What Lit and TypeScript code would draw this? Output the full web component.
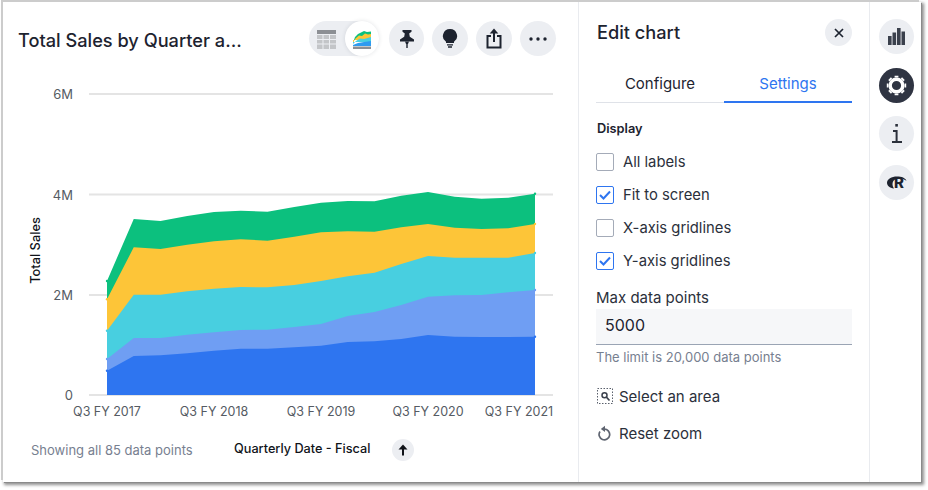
import { LitElement, html, css, svg } from "lit";
import { customElement } from "lit/decorators.js";

const XS = Array.from({ length: 17 }, (_, i) => 107 + i * 26.75);
const BOTTOM = 395;
const SERIES: { color: string; top: number[] }[] = [
  { color: "#0cc07e", top: [281, 219, 221, 216, 212, 210.7, 211.7, 207, 202.7, 201, 201.3, 195.7, 192, 196.7, 198.7, 197.7, 193.7] },
  { color: "#fdc538", top: [299.3, 247.3, 249, 244.7, 241.3, 239.3, 240.7, 236.7, 232.3, 231.3, 231.7, 227.3, 224, 227.7, 229, 228.3, 224] },
  { color: "#48cfe0", top: [330.7, 294.7, 294.7, 291.3, 288.7, 287, 287.3, 285, 281, 276.3, 272.7, 264, 256, 257.7, 257.7, 257.7, 253] },
  { color: "#6f9ef3", top: [359, 338, 338, 334.7, 332.3, 330, 329.7, 327, 324, 316, 312, 305, 296.7, 295.3, 295, 292.3, 290] },
  { color: "#2e75f0", top: [370.7, 356, 355.3, 353.3, 350.7, 348.7, 348.7, 347.3, 345.7, 342, 341.3, 339, 335, 336.7, 337, 337, 336.7] },
];

function areaPath(top: number[]) {
  const line = top.map((y, i) => `${XS[i]},${y}`).join(" L");
  return `M${XS[0]},${BOTTOM} L${line} L${XS[16]},${BOTTOM} Z`;
}

const GRID = [
  { y: 94, label: "6M" },
  { y: 194.5, label: "4M" },
  { y: 295, label: "2M" },
  { y: 395, label: "0" },
];
const XLABELS = [
  { x: 107, label: "Q3 FY 2017" },
  { x: 214, label: "Q3 FY 2018" },
  { x: 321, label: "Q3 FY 2019" },
  { x: 428, label: "Q3 FY 2020" },
  { x: 519, label: "Q3 FY 2021" },
];

const CHECKS = [
  { label: "All labels", on: false },
  { label: "Fit to screen", on: true },
  { label: "X-axis gridlines", on: false },
  { label: "Y-axis gridlines", on: true },
];

@customElement("app-root")
export class AppRoot extends LitElement {
  static styles = css`
    :host {
      display: block;
      width: 928px;
      height: 490px;
      overflow: hidden;
      background: #fff;
      font-family: Inter, "Liberation Sans", sans-serif;
      color: #1d232f;
    }
    .stage {
      box-sizing: border-box;
      width: 928px;
      height: 490px;
      padding: 2px 7px 8px 3px;
    }
    .card {
      display: flex;
      height: 480px;
      background: #fff;
      box-shadow: -2px -2px 0 #cccccc, 1px 1px 0 #8a8a8a, 2px 2px 3px 1px #8f8f8f;
    }
    .main {
      box-sizing: border-box;
      width: 576px;
      border-right: 1px solid #e9ebef;
      display: flex;
      flex-direction: column;
    }
    .head {
      display: flex;
      align-items: center;
      justify-content: space-between;
      padding: 19px 22px 0 15px;
    }
    .title {
      font-size: 18.2px;
      font-weight: 500;
      white-space: nowrap;
      padding-top: 3px;
    }
    .tools {
      display: flex;
      gap: 8px;
    }
    .round {
      width: 36px;
      height: 35px;
      border-radius: 50%;
      background: #eceef2;
      display: flex;
      align-items: center;
      justify-content: center;
      flex: none;
    }
    .round.pin {
      width: 35px;
    }
    .toggle {
      width: 70px;
      height: 35px;
      border-radius: 18px;
      background: #eceef2;
      display: flex;
      align-items: center;
      margin-right: 2px;
    }
    .toggle .left {
      width: 36px;
      display: flex;
      justify-content: center;
      padding-top: 1px;
    }
    .toggle .right {
      width: 35px;
      height: 35px;
      border-radius: 50%;
      background: #fff;
      box-shadow: 0 0 4px rgba(30, 40, 60, 0.12);
      display: flex;
      align-items: center;
      justify-content: center;
      padding-top: 2px;
      box-sizing: border-box;
    }
    .plot {
      display: block;
      width: 575px;
      height: 366px;
      margin-top: 10px;
    }
    .axis {
      font-family: Inter, "Liberation Sans", sans-serif;
      font-size: 13px;
      fill: #555b63;
    }
    .axis-x {
      font-size: 12.5px;
    }
    .axis-title {
      font-family: Inter, "Liberation Sans", sans-serif;
      font-size: 12.8px;
      font-weight: 500;
      fill: #101319;
    }
    .foot {
      display: flex;
      align-items: center;
      padding: 7px 0 0 28px;
    }
    .count {
      font-size: 13px;
      color: #778090;
      width: 203px;
      white-space: nowrap;
    }
    .dim {
      font-size: 12.7px;
      font-weight: 500;
      color: #101319;
      width: 158px;
      white-space: nowrap;
      margin-top: -3px;
    }
    .sort {
      width: 22px;
      height: 22px;
      border-radius: 50%;
      background: #eceef2;
      display: flex;
      align-items: center;
      justify-content: center;
    }
    .panel {
      box-sizing: border-box;
      width: 291px;
      border-right: 1px solid #e9ebef;
      padding: 17px 17px 0 17px;
      display: flex;
      flex-direction: column;
    }
    .panel-head {
      display: flex;
      align-items: center;
      justify-content: space-between;
      height: 27px;
    }
    .panel-title {
      font-size: 18.2px;
      font-weight: 500;
      padding: 0 0 2px 1px;
    }
    .close {
      width: 27px;
      height: 27px;
      border-radius: 50%;
      background: #eceef2;
      display: flex;
      align-items: center;
      justify-content: center;
    }
    .tabs {
      display: flex;
      margin-top: 20px;
      border-bottom: 1px solid #dfe2e8;
      height: 37px;
      box-sizing: border-box;
    }
    .tab {
      flex: 1;
      text-align: center;
      font-size: 15px;
      line-height: 35px;
      box-sizing: border-box;
      height: 37px;
    }
    .tab.active {
      color: #2e75f0;
      border-bottom: 2px solid #2e75f0;
    }
    .section {
      font-size: 12.8px;
      font-weight: 600;
      margin-top: 18px;
      line-height: 15px;
      padding-left: 1px;
    }
    .checks {
      display: flex;
      flex-direction: column;
      gap: 15px;
      margin-top: 17px;
    }
    .check {
      display: flex;
      align-items: center;
      height: 18px;
      font-size: 14.8px;
      color: #2b303b;
    }
    .box {
      box-sizing: border-box;
      width: 18px;
      height: 18px;
      border: 1px solid #a4abb8;
      border-radius: 2px;
      margin-right: 9px;
      display: flex;
      align-items: center;
      justify-content: center;
      background: #fff;
    }
    .box.on {
      border-color: #2e75f0;
    }
    .field-label {
      font-size: 15px;
      margin-top: 18px;
      line-height: 20px;
      color: #2b303b;
    }
    .input {
      box-sizing: border-box;
      height: 36px;
      margin-top: 1px;
      background: #f6f7f9;
      border-bottom: 1px solid #9aa4b4;
      font-size: 16px;
      padding-left: 9px;
      line-height: 32px;
      color: #1d232f;
    }
    .hint {
      font-size: 13px;
      color: #778090;
      margin-top: 4px;
      line-height: 16px;
    }
    .action {
      display: flex;
      align-items: center;
      font-size: 15px;
      color: #2b303b;
      height: 20px;
      gap: 6px;
    }
    .action svg {
      margin-left: 1px;
    }
    .action.first {
      margin-top: 21px;
    }
    .action.second {
      margin-top: 17px;
    }
    .rail {
      flex: 1;
      display: flex;
      flex-direction: column;
      align-items: center;
      gap: 13.5px;
      padding-top: 17px;
      padding-left: 2px;
    }
    .rail .round {
      width: 35px;
    }
    .rail .dark {
      background: #2f3442;
    }
    .r-mark {
      position: relative;
      width: 20px;
      height: 13px;
      display: block;
    }
    .r-mark svg {
      position: absolute;
      left: 0;
      top: 0;
    }
    .r-mark span {
      position: absolute;
      left: 7.500px;
      top: -0.500px;
      font-size: 15px;
      line-height: 15px;
      font-weight: 800;
      color: #1d232f;
    }
  `;

  private chart() {
    return html`<svg class="plot" viewBox="3 66 575 366" width="575" height="366">
      ${GRID.map(
        (g) => svg`<line x1="89" x2="553" y1=${g.y} y2=${g.y} stroke="#e4e4e4" stroke-width="2"></line>
          <text class="axis" x="73" y=${g.y + 5} text-anchor="end">${g.label}</text>`
      )}
      ${SERIES.map(
        (s) => svg`<path d=${areaPath(s.top)} fill=${s.color}></path>
          <circle cx=${XS[0]} cy=${s.top[0]} r="1.200" fill=${s.color}></circle>
          <circle cx=${XS[16]} cy=${s.top[16]} r="1.200" fill=${s.color}></circle>`
      )}
      ${XLABELS.map(
        (l) => svg`<text class="axis axis-x" x=${l.x} y="416" text-anchor="middle">${l.label}</text>`
      )}
      <text class="axis-title" transform="translate(40 250.500) rotate(-90)" text-anchor="middle">Total Sales</text>
    </svg>`;
  }

  render() {
    return html`<div class="stage">
      <div class="card">
        <section class="main">
          <header class="head">
            <div class="title">Total Sales by Quarter a…</div>
            <div class="tools">
              <div class="toggle">
                <div class="left">
                  <svg width="19" height="19" viewBox="0 0 19 19">
                    <rect x="0" y="0" width="19" height="4" fill="#8c8f94"></rect>
                    <rect x="0" y="5" width="19" height="14" fill="#c3c5c8"></rect>
                    <path d="M6 5v14M12.500 5v14M0 9.500h19M0 14h19" stroke="#eceef2" stroke-width="1"></path>
                  </svg>
                </div>
                <div class="right">
                  <svg width="20" height="20" viewBox="0 0 20 20">
                    <path d="M1 13 L3 7 L6 4 L9 2.500 L12 1 L15 2 L19 1.500 V10 H1 Z" fill="#0cc07e"></path>
                    <path d="M1 13 L3.500 8.500 L7 5.500 L10 6 L13 3.500 L16 4.500 L19 4 V10 H1 Z" fill="#fdc538"></path>
                    <path d="M1 14 L4 11 L8 8.500 L12 9 L19 7 V12 H1 Z" fill="#48cfe0"></path>
                    <path d="M1 15 L6 13 L12 12 L19 11 V16 H1 Z" fill="#2e9bf0"></path>
                    <rect x="1" y="16.500" width="18" height="2.500" fill="#8c8f94"></rect>
                  </svg>
                </div>
              </div>
              <div class="round pin">
                <svg width="14" height="18" viewBox="0 0 14 18">
                  <path d="M2.500 0H11.500V1.800L9.200 3.600L9.800 6.800L14 9.500V11.500H0V9.500L4.200 6.800L4.800 3.600L2.500 1.800Z" fill="#1d232f"></path>
                  <path d="M5 11.500H9L8 14H6Z" fill="#1d232f"></path>
                  <rect x="6.300" y="13" width="1.400" height="5" fill="#1d232f"></rect>
                </svg>
              </div>
              <div class="round">
                <svg width="16" height="21" viewBox="0 0 16 21">
                  <path d="M8 1A7 7 0 0 1 12 13.800V15H4V13.800A7 7 0 0 1 8 1Z" fill="#1d232f"></path>
                  <path d="M5 16.800H11M6 19H10" stroke="#1d232f" stroke-width="1.300"></path>
                </svg>
              </div>
              <div class="round">
                <svg width="16" height="21" viewBox="0 0 16 21">
                  <path d="M5 8H1.500V19.500H14.500V8H11" fill="none" stroke="#1d232f" stroke-width="2"></path>
                  <path d="M8 14V3" stroke="#1d232f" stroke-width="2"></path>
                  <path d="M8 0.500L12.300 5.500H3.700Z" fill="#1d232f"></path>
                </svg>
              </div>
              <div class="round">
                <svg width="18" height="4" viewBox="0 0 18 4">
                  <circle cx="2" cy="2" r="1.700" fill="#1d232f"></circle>
                  <circle cx="9" cy="2" r="1.700" fill="#1d232f"></circle>
                  <circle cx="16" cy="2" r="1.700" fill="#1d232f"></circle>
                </svg>
              </div>
            </div>
          </header>
          ${this.chart()}
          <footer class="foot">
            <div class="count">Showing all 85 data points</div>
            <div class="dim">Quarterly Date - Fiscal</div>
            <div class="sort">
              <svg width="10" height="12" viewBox="0 0 10 12">
                <path d="M5 11.500V3" stroke="#101319" stroke-width="2"></path>
                <path d="M5 0.500L9.500 5.500H0.500Z" fill="#101319"></path>
              </svg>
            </div>
          </footer>
        </section>

        <aside class="panel">
          <div class="panel-head">
            <div class="panel-title">Edit chart</div>
            <div class="close">
              <svg width="10" height="10" viewBox="0 0 10 10">
                <path d="M1 1L9 9M9 1L1 9" stroke="#1d232f" stroke-width="1.700"></path>
              </svg>
            </div>
          </div>
          <div class="tabs">
            <div class="tab">Configure</div>
            <div class="tab active">Settings</div>
          </div>
          <div class="section">Display</div>
          <div class="checks">
            ${CHECKS.map(
              (c) => html`<div class="check">
                <span class="box ${c.on ? "on" : ""}">
                  ${c.on
                    ? html`<svg width="12" height="10" viewBox="0 0 12 10">
                        <path d="M1 5L4.500 8.500L11 1.500" fill="none" stroke="#2e75f0" stroke-width="2"></path>
                      </svg>`
                    : ""}
                </span>
                ${c.label}
              </div>`
            )}
          </div>
          <div class="field-label">Max data points</div>
          <div class="input">5000</div>
          <div class="hint">The limit is 20,000 data points</div>
          <div class="action first">
            <svg width="16" height="16" viewBox="0 0 16 16">
              <rect x="0.500" y="0.500" width="15" height="15" fill="none" stroke="#5a606c" stroke-width="1" stroke-dasharray="1.500 1.500"></rect>
              <circle cx="7.500" cy="7.200" r="2.500" fill="none" stroke="#3a404c" stroke-width="1.500"></circle>
              <path d="M9.500 9.200L12.500 12.500" stroke="#3a404c" stroke-width="1.700"></path>
            </svg>
            Select an area
          </div>
          <div class="action second">
            <svg width="16" height="16" viewBox="0 0 16 16">
              <path d="M7 4.200A5.300 5.300 0 1 1 3 6.500" fill="none" stroke="#5f6571" stroke-width="1.700"></path>
              <path d="M8 0.800V7L3.800 3.900Z" fill="#5f6571"></path>
            </svg>
            Reset zoom
          </div>
        </aside>

        <nav class="rail">
          <div class="round">
            <svg width="17" height="17" viewBox="0 0 17 17">
              <rect x="0" y="8" width="3.600" height="9" fill="#3a404c"></rect>
              <rect x="4.500" y="4.500" width="3.600" height="12.500" fill="#3a404c"></rect>
              <rect x="9" y="0" width="3.600" height="17" fill="#3a404c"></rect>
              <rect x="13.500" y="3.500" width="3.600" height="13.500" fill="#3a404c"></rect>
            </svg>
          </div>
          <div class="round dark">
            <svg width="21" height="21" viewBox="0 0 21 21">
              <circle cx="10.500" cy="10.500" r="6.300" fill="none" stroke="#fff" stroke-width="3.400"></circle>
              <path d="M10.500 2.500V0.800M10.500 20.200V18.500M2.500 10.500H0.800M20.200 10.500H18.500M4.800 4.800L3.600 3.600M17.400 17.400L16.200 16.200M4.800 16.200L3.600 17.400M17.400 3.600L16.200 4.800" stroke="#fff" stroke-width="3.800"></path>
            </svg>
          </div>
          <div class="round">
            <svg width="10" height="19" viewBox="0 0 10 19">
              <rect x="3.300" y="0" width="2.600" height="2.600" fill="#2b303b"></rect>
              <path d="M1 7H4.600V17.500M0 18H10" fill="none" stroke="#2b303b" stroke-width="2"></path>
            </svg>
          </div>
          <div class="round">
            <span class="r-mark">
              <svg width="20" height="13" viewBox="0 0 20 13">
                <path d="M7 12.500C2.500 11.800 0 9.800 0 6.800C0 3 4.500 0.500 10 0.500C14.500 0.500 18.500 2 19.500 4.800L15.500 2.800C12.500 2 9 2.500 7.300 4C5 6 5 9.500 7 12.500Z" fill="#1d232f"></path>
              </svg>
              <span>R</span>
            </span>
          </div>
        </nav>
      </div>
    </div>`;
  }
}
